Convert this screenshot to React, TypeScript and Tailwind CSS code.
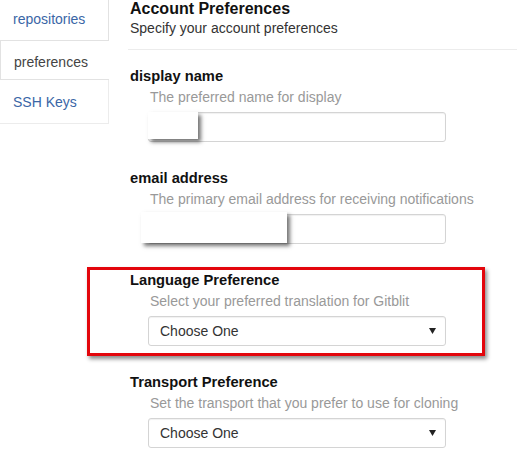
const fields = [
    { label: "display name", hint: "The preferred name for display", kind: "text", redact: "name" },
    { label: "email address", hint: "The primary email address for receiving notifications", kind: "text", redact: "email" },
    { label: "Language Preference", hint: "Select your preferred translation for Gitblit", kind: "select", marked: true },
    { label: "Transport Preference", hint: "Set the transport that you prefer to use for cloning", kind: "select" },
]

const Arrow = () => (
    <svg width="7" height="6" viewBox="0 0 7 6">
        <polygon points="0,0 7,0 3.5,6" fill="#222" />
    </svg>
)

const Field = ({ f }: { f: (typeof fields)[number] }) => (
    <div className="relative mb-[26px]">
        {/* Annotation box drawn over the field */}
        {f.marked && (
            <div className="pointer-events-none absolute left-[-41px] top-[-3px] w-[398px] h-[89px] border-[3px] border-[#e3060c] shadow-[2px_3px_4px_rgba(0,0,0,0.45)]"></div>
        )}
        <h4 className="pl-[2px] text-[14.7px] leading-[20px] font-bold text-[#111]">{f.label}</h4>
        <p className="pl-[22px] mt-[1px] text-[14px] leading-[20px] text-[#999]">{f.hint}</p>
        <div className="relative ml-[20px] mt-[5px] w-[298px] h-[30px] flex items-center justify-between pl-[11px] pr-[9px] bg-white border border-[#d4d4d4] rounded-[3px] shadow-[inset_0_1px_1px_rgba(0,0,0,0.06)]">
            {f.kind === "select" && (
                <>
                    <span className="text-[14px] text-[#333]">Choose One</span>
                    <Arrow />
                </>
            )}
            {/* Redacted values */}
            {f.redact === "name" && (
                <div className="absolute left-[-1px] top-[-1px] w-[50px] h-[27px] bg-white shadow-[3px_3px_4px_rgba(0,0,0,0.55)]"></div>
            )}
            {f.redact === "email" && (
                <div className="absolute left-[-8px] top-[-3px] w-[146px] h-[31px] bg-white shadow-[3px_3px_4px_rgba(0,0,0,0.55)]"></div>
            )}
        </div>
    </div>
)

const App = () => {
    return (
        <div className="w-[517px] h-[457px] overflow-hidden bg-white flex font-['Liberation_Sans',Arial,sans-serif]">
            {/* Tabs */}
            <nav className="w-[109px] shrink-0 flex flex-col text-[14px]">
                <div className="h-[41px] pl-[13px] pt-[9px] border-r border-b border-[#e2e2e2] text-[#3a66a6]">repositories</div>
                <div className="h-[39px] pl-[13px] pt-[11px] border-l border-b border-[#e2e2e2] text-[#444] bg-white">preferences</div>
                <div className="h-[44px] pl-[13px] pt-[12px] border-r border-b border-[#ececec] text-[#3a66a6]">SSH Keys</div>
            </nav>

            {/* Content */}
            <main className="ml-[19px] flex-1">
                <h3 className="pl-[2px] text-[16px] leading-[18px] font-bold text-[#111]">Account Preferences</h3>
                <p className="pl-[2px] text-[14px] leading-[20px] text-[#333]">Specify your account preferences</p>
                <hr className="mt-[11px] border-t border-[#ececec]" />
                <div className="mt-[16px]">
                    {fields.map((f) => (
                        <Field key={f.label} f={f} />
                    ))}
                </div>
            </main>
        </div>
    )
}

export default App
